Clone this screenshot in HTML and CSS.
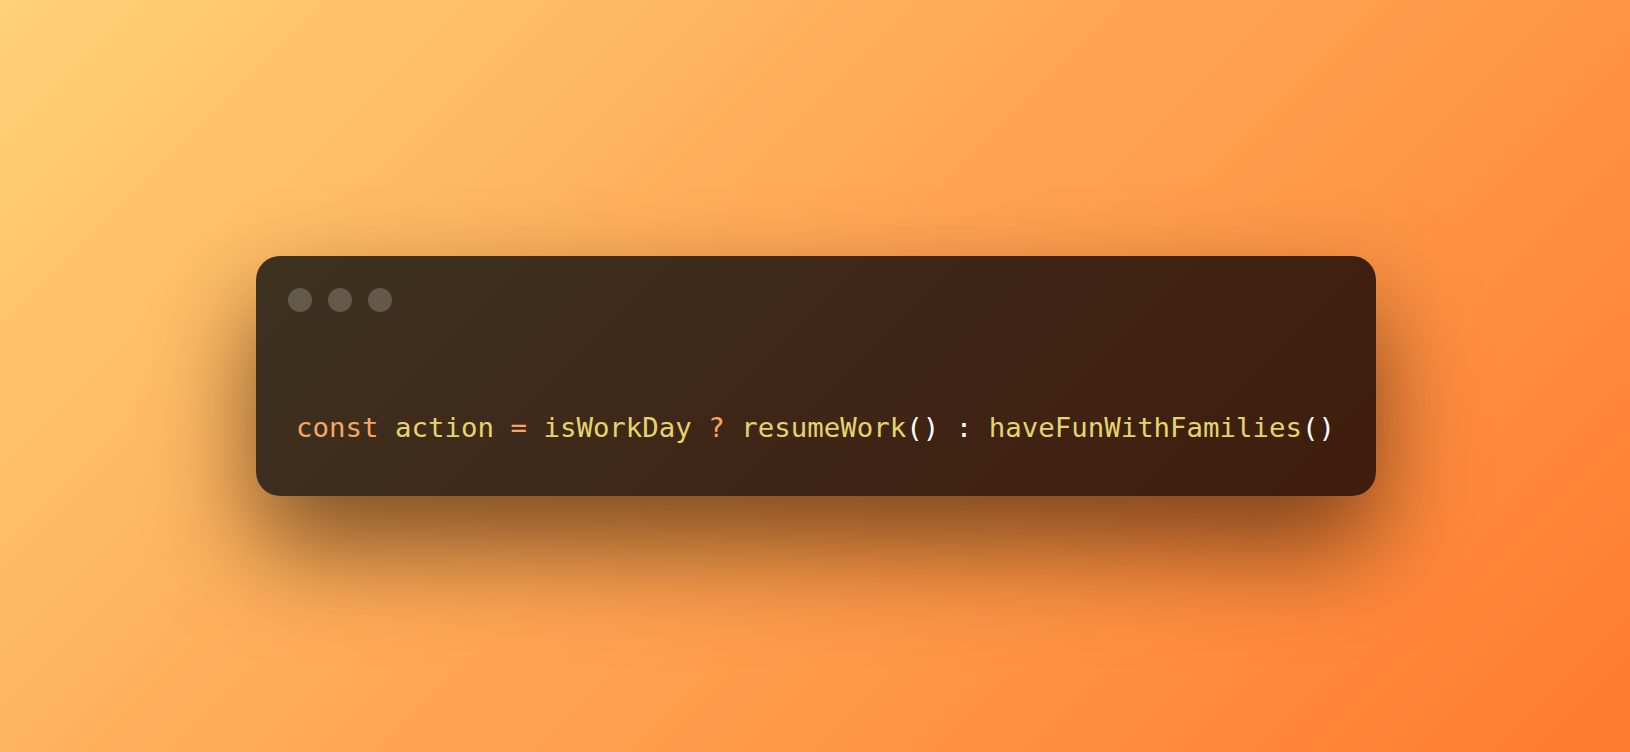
FILE: index.html
```html
<!DOCTYPE html>
<html lang="en">
<head>
<meta charset="utf-8">
<title>Code card</title>
<link rel="stylesheet" href="styles.css">
</head>
<body>
  <main class="stage">
    <section class="card">
      <div class="dots">
        <span class="dot"></span>
        <span class="dot"></span>
        <span class="dot"></span>
      </div>
      <pre class="code"><span class="kw">const</span> <span class="id">action</span> <span class="op">=</span> <span class="id">isWorkDay</span> <span class="op">?</span> <span class="id">resumeWork</span><span class="pn">()</span> <span class="pn">:</span> <span class="id">haveFunWithFamilies</span><span class="pn">()</span></pre>
    </section>
  </main>
</body>
</html>
```

FILE: styles.css
```css
html, body {
  margin: 0;
  padding: 0;
  height: 100%;
}

body {
  background: linear-gradient(135deg, #ffd277 0%, #ffac58 40%, #ff7a2e 100%);
  font-family: "DejaVu Sans Mono", "Liberation Mono", monospace;
}

.stage {
  height: 100vh;
  display: flex;
  align-items: center;
  justify-content: center;
  padding-left: 2px;
  box-sizing: border-box;
}

.card {
  width: 1120px;
  height: 240px;
  box-sizing: border-box;
  padding: 32px;
  border-radius: 24px;
  background: linear-gradient(135deg, #3d3220 0%, #3f2516 55%, #3f1d0c 100%);
  box-shadow: 0 50px 100px rgba(30, 10, 0, 0.58);
  display: flex;
  flex-direction: column;
}

.dots {
  display: flex;
  gap: 16px;
}

.dot {
  width: 24px;
  height: 24px;
  border-radius: 50%;
  background: rgba(255, 255, 255, 0.2);
}

.code {
  margin: 96px 0 0;
  padding-left: 8px;
  font-family: "DejaVu Sans Mono", "Liberation Mono", monospace;
  font-size: 27.4px;
  line-height: 40px;
  white-space: pre;
}

.kw, .op { color: #f7a560; }
.id { color: #e5d46c; }
.pn { color: #ffffff; }
```
